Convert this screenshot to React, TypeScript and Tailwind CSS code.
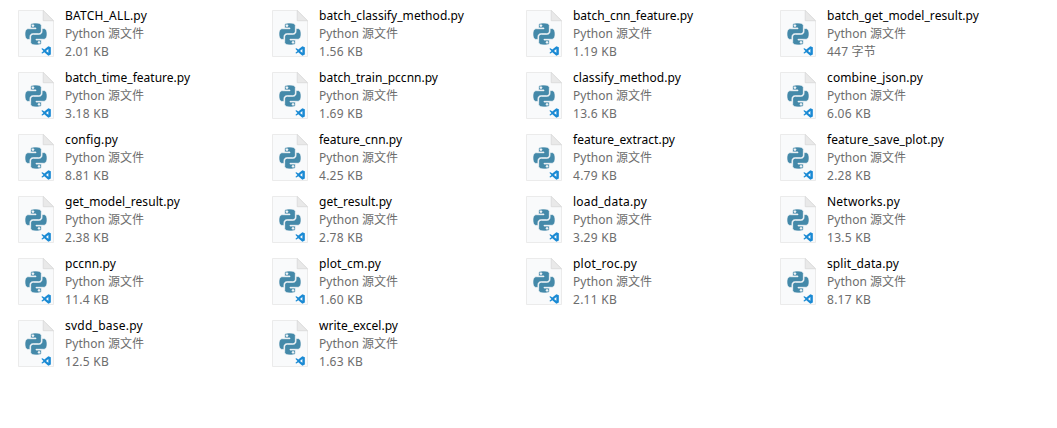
import { SiPython } from "react-icons/si";

type FileItem = { name: string; size: string; width: number };

const files: FileItem[] = [
  { name: "BATCH_ALL.py", size: "2.01 KB", width: 82 },
  { name: "batch_classify_method.py", size: "1.56 KB", width: 145 },
  { name: "batch_cnn_feature.py", size: "1.19 KB", width: 120 },
  { name: "batch_get_model_result.py", size: "447 字节", width: 152 },
  { name: "batch_time_feature.py", size: "3.18 KB", width: 125 },
  { name: "batch_train_pccnn.py", size: "1.69 KB", width: 119 },
  { name: "classify_method.py", size: "13.6 KB", width: 108 },
  { name: "combine_json.py", size: "6.06 KB", width: 96 },
  { name: "config.py", size: "8.81 KB", width: 53 },
  { name: "feature_cnn.py", size: "4.25 KB", width: 83 },
  { name: "feature_extract.py", size: "4.79 KB", width: 102 },
  { name: "feature_save_plot.py", size: "2.28 KB", width: 117 },
  { name: "get_model_result.py", size: "2.38 KB", width: 115 },
  { name: "get_result.py", size: "2.78 KB", width: 73 },
  { name: "load_data.py", size: "3.29 KB", width: 74 },
  { name: "Networks.py", size: "13.5 KB", width: 73 },
  { name: "pccnn.py", size: "11.4 KB", width: 51 },
  { name: "plot_cm.py", size: "1.60 KB", width: 62 },
  { name: "plot_roc.py", size: "2.11 KB", width: 64 },
  { name: "split_data.py", size: "8.17 KB", width: 72 },
  { name: "svdd_base.py", size: "12.5 KB", width: 78 },
  { name: "write_excel.py", size: "1.63 KB", width: 79 },
];

// Spreads the text evenly so that it fills the given width.
function fit(width: number) {
  return (el: HTMLSpanElement | null) => {
    if (!el || !el.textContent) return;
    el.style.letterSpacing = "0px";
    const natural = el.getBoundingClientRect().width;
    el.style.letterSpacing = `${(width - natural) / el.textContent.length}px`;
  };
}

function PythonFileIcon() {
  return (
    <div className="relative mt-[3px] h-12 w-9 shrink-0">
      <svg className="block" width="36" height="48" viewBox="0 0 36 48">
        <path d="M.5.5H25.3L35.5 10.7V46.5H.5Z" fill="#f9fafb" stroke="#ebebeb" />
        <path d="M25.2.5V10.7H35.5Z" fill="#e9e9e9" stroke="#d6d6d6" strokeWidth=".7" />
        <path
          transform="translate(22.8 35.6) scale(.44)"
          fill="#1a8ad4"
          d="M17.2 1.2 22.8 3.8V20.2L17.2 22.8 8 14.9 3.8 18.2 1.2 16.6 6 12 1.2 7.4 3.8 5.8 8 9.1ZM17.2 7.8 11.8 12l5.4 4.2Z"
        />
      </svg>
      <SiPython
        className="absolute left-[6.5px] top-[12.5px] stroke-[#f9fafb] stroke-[0.8] text-[#4489a9]"
        size={22}
      />
    </div>
  );
}

function FileTile({ name, size, width }: FileItem) {
  return (
    <div className="flex h-[62px] gap-[11px]">
      <PythonFileIcon />
      <div className="flex flex-col items-start whitespace-nowrap text-xs leading-[18px] text-[#6d6d6d]">
        <span ref={fit(width)} className="h-[18px] text-black">{name}</span>
        <span ref={fit(79)} className="h-[18px]">Python 源文件</span>
        <span ref={fit(size.includes("KB") ? 44 : 49)} className="h-[18px]">{size}</span>
      </div>
    </div>
  );
}

export default function App() {
  return (
    <main className="h-[428px] w-[1057px] overflow-hidden bg-white pl-[18px] pt-[7px] font-['Noto_Sans','Noto_Sans_CJK_SC',sans-serif]">
      <div className="grid grid-cols-[repeat(4,254px)]">
        {files.map((file) => (
          <FileTile key={file.name} {...file} />
        ))}
      </div>
    </main>
  );
}
